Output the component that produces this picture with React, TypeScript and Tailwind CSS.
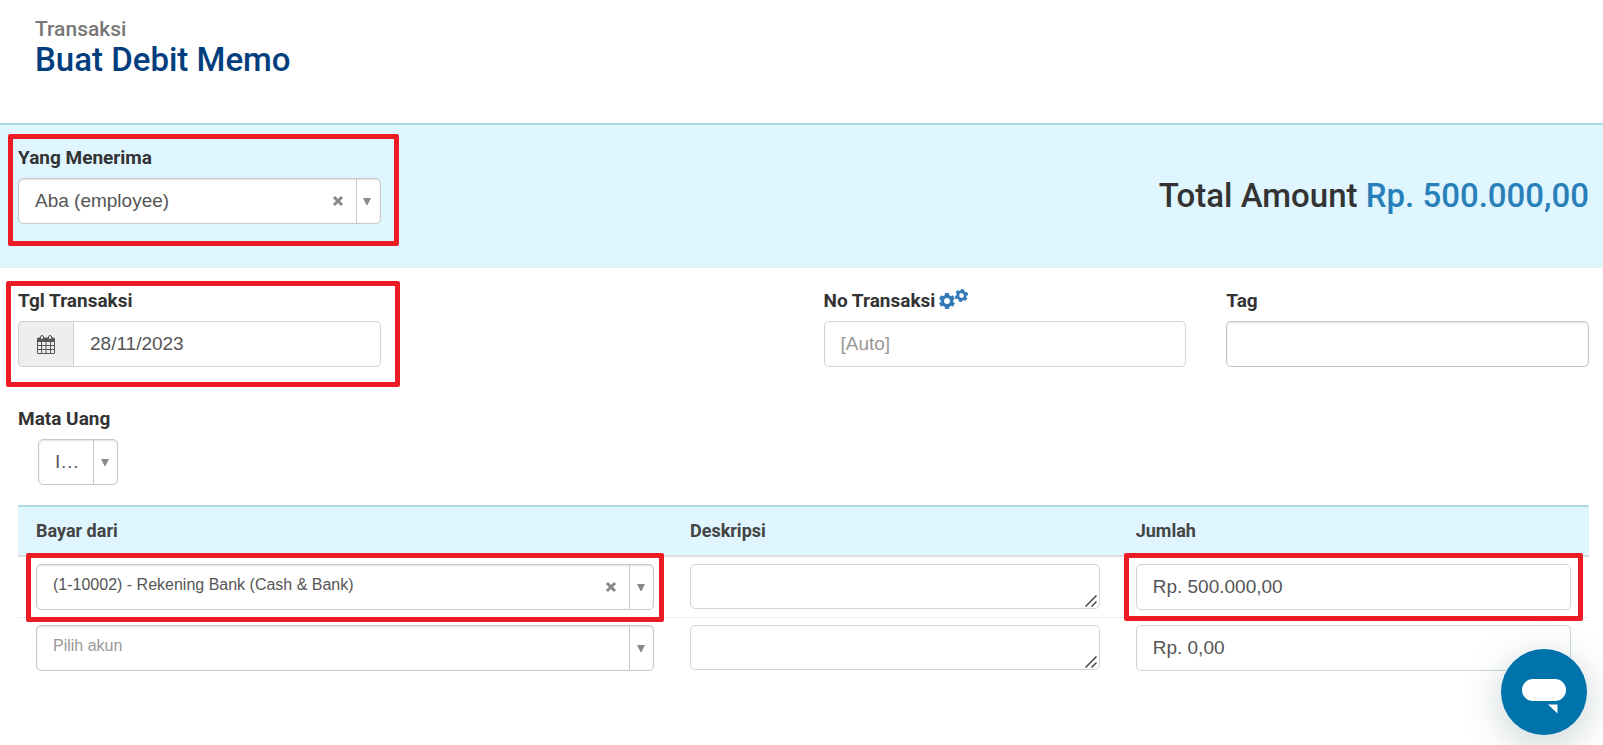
import { ReactNode } from "react";

const fieldText = "font-[Liberation_Sans,sans-serif] text-[#555]";

const Highlight = ({ className }: { className: string }) => (
    <div className={`pointer-events-none absolute z-10 rounded-[2px] border-[5px] border-[#ed1c24] ${className}`} />
);

const ClearIcon = () => (
    <svg width="12" height="12" viewBox="0 0 12 12">
        <path d="M3 3 9 9M9 3 3 9" stroke="#8a8a8a" strokeWidth="3" strokeLinecap="square" />
    </svg>
);

const GearIcon = ({ className }: { className: string }) => (
    <svg viewBox="0 0 16 16" className={className} stroke="currentColor" fill="none">
        <circle cx="8" cy="8" r="4.600" strokeWidth="3.400" />
        {[0, 60, 120].map(angle => (
            <path key={angle} d="M8 0v3.500M8 12.500V16" strokeWidth="4.200" transform={`rotate(${angle} 8 8)`} />
        ))}
    </svg>
);

const CalendarIcon = () => (
    <svg width="18" height="19" viewBox="0 0 18 19" fill="none">
        <path d="M0 4a1.500 1.500 0 0 1 1.500-1.500h15A1.500 1.500 0 0 1 18 4v13.500a1.500 1.500 0 0 1-1.500 1.500h-15A1.500 1.500 0 0 1 0 17.500z" fill="#555" />
        <path d="M1 7h3v3H1zM5 7h3.500v3H5zM9.500 7H13v3H9.500zM14 7h3v3h-3zM1 11h3v3H1zM5 11h3.500v3H5zM9.500 11H13v3H9.500zM14 11h3v3h-3zM1 15h3v3H1zM5 15h3.500v3H5zM9.500 15H13v3H9.500zM14 15h3v3h-3z" fill="#eee" />
        <rect x="3.500" y=".5" width="3" height="4" rx="1.500" fill="#eee" stroke="#555" />
        <rect x="11.500" y=".5" width="3" height="4" rx="1.500" fill="#eee" stroke="#555" />
    </svg>
);

type DropdownProps = {
    id?: string;
    label?: string;
    value: string;
    clearable?: boolean;
    className?: string;
};

const Dropdown = ({ id, label, value, clearable, className = "text-[19px]" }: DropdownProps) => (
    <div className="relative flex h-[46px] overflow-hidden rounded-[5px] border border-[#c8c8c8] bg-white shadow-[inset_0_1px_2px_rgba(0,0,0,0.12)]">
        <select id={id} aria-label={label}
        className={`w-full min-w-0 appearance-none bg-transparent pl-4 ${fieldText} ${className}`}>
            <option>{value}</option>
        </select>
        {clearable && (
            <button type="button" aria-label="Hapus" className="absolute inset-y-0 right-9 flex items-center">
                <ClearIcon />
            </button>
        )}
        <span className="pointer-events-none absolute inset-y-0 right-0 flex w-6 items-center justify-center border-l border-[#c8c8c8] pr-[2px]">
            <svg width="8" height="7" viewBox="0 0 8 7">
                <path d="M0 0h8L4.500 7h-1z" fill="#8a8a8a" />
            </svg>
        </span>
    </div>
);

const Label = ({ htmlFor, children }: { htmlFor: string; children: ReactNode }) => (
    <label htmlFor={htmlFor} className="mb-2 block text-[19px] leading-6 font-bold">{children}</label>
);

const inputStyle = `block h-[46px] w-full min-w-0 border bg-white px-4 text-[19px] placeholder:text-[#999] ${fieldText}`;

const rows = [
    { akun: "(1-10002) - Rekening Bank (Cash & Bank)", jumlah: "Rp. 500.000,00", filled: true },
    { akun: "Pilih akun", jumlah: "Rp. 0,00", filled: false },
];

const App = () => {
    return (
        <div className="min-h-screen bg-white font-[Roboto,sans-serif] text-[#333]">
            <header className="px-[35px] pt-[17px] pb-[45px]">
                <p className="text-[21px] leading-6 font-medium text-[#777]">Transaksi</p>
                <h1 className="text-[33px] leading-[37px] font-medium text-[#023e7d]">Buat Debit Memo</h1>
            </header>

            <form>
                <section className="border-t-2 border-b border-t-[#add8e6] border-b-[#e8eeee] bg-[#dff6ff] pt-[21px] pr-[14px] pb-[43px] pl-[18px]">
                    <div className="grid grid-cols-4 gap-10">
                        <div className="relative">
                            <Label htmlFor="penerima">Yang Menerima</Label>
                            <Dropdown id="penerima" value="Aba (employee)" clearable />
                            <Highlight className="-top-3 -right-[18px] -bottom-[22px] -left-[10px]" />
                        </div>
                        <p className="col-span-3 self-end text-right text-[33px] leading-[56px] font-medium">
                            Total Amount <span className="text-[#2980b9]">Rp. 500.000,00</span>
                        </p>
                    </div>
                </section>

                <section className="pt-[21px] pr-[14px] pl-[18px]">
                    <div className="grid grid-cols-4 gap-10">
                        <div className="relative">
                            <Label htmlFor="tanggal">Tgl Transaksi</Label>
                            <div className="flex">
                                <span className="flex w-[55px] shrink-0 items-center justify-center rounded-l-[5px] border border-r-0 border-[#ccc] bg-[#eee]">
                                    <CalendarIcon />
                                </span>
                                <input id="tanggal" defaultValue="28/11/2023" className={`${inputStyle} rounded-r-[5px] border-[#ccd8d8]`} />
                            </div>
                            <Highlight className="-top-2 -right-[19px] -bottom-5 -left-3" />
                        </div>
                        <div className="col-start-3">
                            <div className="flex gap-1">
                                <Label htmlFor="nomor">No Transaksi</Label>
                                <button type="button" aria-label="Pengaturan nomor" className="flex h-5 items-start text-[#337ab7]">
                                    <GearIcon className="mt-1 size-4" />
                                    <GearIcon className="size-[13px] rotate-12" />
                                </button>
                            </div>
                            <input id="nomor" placeholder="[Auto]" className={`${inputStyle} rounded-[5px] border-[#ccd8d8]`} />
                        </div>
                        <div>
                            <Label htmlFor="tag">Tag</Label>
                            <input id="tag" className={`${inputStyle} rounded-[5px] border-[#c4c4c4] shadow-[inset_0_1px_2px_rgba(0,0,0,0.12)]`} />
                        </div>
                    </div>

                    <div className="mt-10">
                        <Label htmlFor="mata-uang">Mata Uang</Label>
                        <div className="ml-5 w-20">
                            <Dropdown id="mata-uang" value="I…" />
                        </div>
                    </div>

                    <table className="mt-5 w-full table-fixed border-separate border-spacing-0 text-left">
                        <thead>
                            <tr className="bg-[#dff6ff] text-lg leading-6 text-[#444]">
                                <th className="h-[52px] w-[654px] border-y-2 border-t-[#add8e6] border-b-[#ddd] px-[18px] font-bold">Bayar dari</th>
                                <th className="border-y-2 border-t-[#add8e6] border-b-[#ddd] px-[18px] font-bold">Deskripsi</th>
                                <th className="w-[30%] border-y-2 border-t-[#add8e6] border-b-[#ddd] px-[18px] font-bold">Jumlah</th>
                            </tr>
                        </thead>
                        <tbody className="[&>tr:first-child>td]:border-b [&>tr>td]:border-[#eee]">
                            {rows.map(row => (
                                <tr key={row.akun} className="align-top">
                                    <td className="px-[18px] py-[7px]">
                                        <div className="relative">
                                            <Dropdown label="Bayar dari" value={row.akun} clearable={row.filled}
                                            className={row.filled ? "pb-1 text-base" : "pb-1 text-base text-[#999]!"} />
                                            {row.filled && <Highlight className="-inset-x-[10px] -top-[11px] -bottom-3" />}
                                        </div>
                                    </td>
                                    <td className="px-[18px] py-[7px]">
                                        <div className="relative">
                                            <textarea aria-label="Deskripsi"
                                            className={`block h-[45px] w-full resize-none rounded-[5px] border border-[#ccd8d8] px-4 py-2 text-[19px] ${fieldText}`} />
                                            <svg width="12" height="12" viewBox="0 0 12 12" className="pointer-events-none absolute right-[3px] bottom-[2px]">
                                                <path d="M.5 11.500 11.500.5M6.500 11.500l5-5" stroke="#444" strokeWidth="1.500" />
                                            </svg>
                                        </div>
                                    </td>
                                    <td className="px-[18px] py-[7px]">
                                        <div className="relative">
                                            <input aria-label="Jumlah" defaultValue={row.jumlah} className={`${inputStyle} rounded-[5px] border-[#ccd8d8]`} />
                                            {row.filled && <Highlight className="-inset-x-[12px] -inset-y-[11px]" />}
                                        </div>
                                    </td>
                                </tr>
                            ))}
                        </tbody>
                    </table>
                </section>
            </form>

            <button type="button" aria-label="Buka obrolan"
            className="fixed right-4 bottom-[10px] z-20 size-[86px] rounded-full bg-[#0073aa] shadow-[0_10px_40px_rgba(0,50,60,0.22)]">
                <svg width="86" height="86" viewBox="0 0 86 86" fill="#fff">
                    <rect x="21" y="30" width="44" height="22" rx="11" />
                    <path d="M47 55.500h9.500v9z" />
                </svg>
            </button>
        </div>
    );
};

export default App;
